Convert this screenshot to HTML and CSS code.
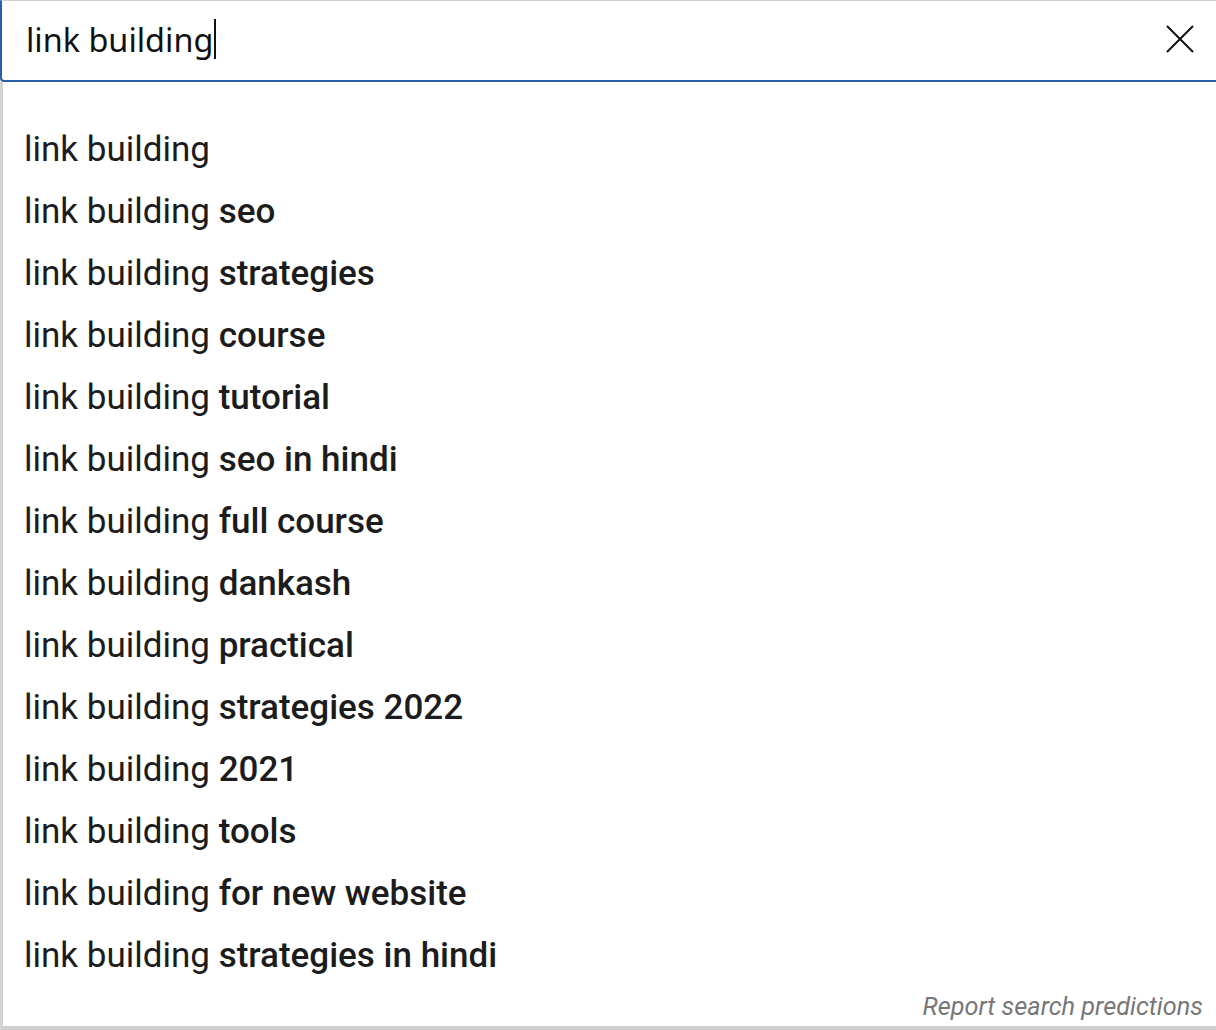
FILE: index.html
```html
<!DOCTYPE html>
<html>
<head>
<meta charset="utf-8">
<link rel="stylesheet" href="styles.css">
</head>
<body>
<div class="search">
  <div class="input">
    <span class="query">link building</span><span class="caret"></span>
  </div>
  <button class="clear" aria-label="Clear">
    <svg width="28" height="28" viewBox="0 0 28 28"><path d="M1 1 L27 27 M27 1 L1 27" stroke="#111" stroke-width="2" fill="none"/></svg>
  </button>
</div>
<div class="dropdown">
  <ul class="list">
    <li>link building</li>
    <li>link building <b>seo</b></li>
    <li>link building <b>strategies</b></li>
    <li>link building <b>course</b></li>
    <li>link building <b>tutorial</b></li>
    <li>link building <b>seo in hindi</b></li>
    <li>link building <b>full course</b></li>
    <li>link building <b>dankash</b></li>
    <li>link building <b>practical</b></li>
    <li>link building <b>strategies 2022</b></li>
    <li>link building <b>2021</b></li>
    <li>link building <b>tools</b></li>
    <li>link building <b>for new website</b></li>
    <li>link building <b>strategies in hindi</b></li>
  </ul>
  <div class="report">Report search predictions</div>
</div>
</body>
</html>
```
FILE: styles.css
```css
html, body {
  margin: 0;
  padding: 0;
  background: #fff;
}
body {
  width: 1216px;
  height: 1030px;
  overflow: hidden;
  display: flex;
  flex-direction: column;
}
.search {
  box-sizing: border-box;
  height: 82px;
  border-top: 1px solid #cfcfcf;
  border-left: 2px solid #2a5da8;
  border-bottom: 2px solid #2a5da8;
  border-bottom-left-radius: 4px;
  display: flex;
  align-items: center;
  padding-left: 24px;
  padding-right: 16px;
  padding-bottom: 4px;
}
.input {
  flex: 1;
  display: flex;
  align-items: center;
  font-family: "Noto Sans", "Open Sans", sans-serif;
  font-size: 32.4px;
  color: #111;
  height: 60px;
}
.caret {
  display: inline-block;
  width: 2px;
  height: 40px;
  background: #111;
  margin-left: 1px;
}
.clear {
  border: 0;
  background: none;
  padding: 0;
  width: 40px;
  height: 40px;
  display: flex;
  align-items: center;
  justify-content: center;
}
.dropdown {
  flex: 1;
  box-sizing: border-box;
  border-left: 3px solid #d3d3d3;
  border-bottom: 4px solid #cfcfcf;
  padding-top: 37px;
  display: flex;
  flex-direction: column;
}
.list {
  list-style: none;
  margin: 0;
  padding: 0;
}
.list li {
  height: 62px;
  line-height: 62px;
  padding-left: 21px;
  font-family: Roboto, "Liberation Sans", sans-serif;
  font-size: 35px;
  color: #1c1c1c;
  white-space: nowrap;
}
.list b {
  font-weight: 500;
}
.report {
  flex: 1;
  display: flex;
  align-items: center;
  justify-content: flex-end;
  padding-right: 13px;
  font-family: Roboto, "Liberation Sans", sans-serif;
  font-style: italic;
  font-size: 25.3px;
  color: #777;
}
```
